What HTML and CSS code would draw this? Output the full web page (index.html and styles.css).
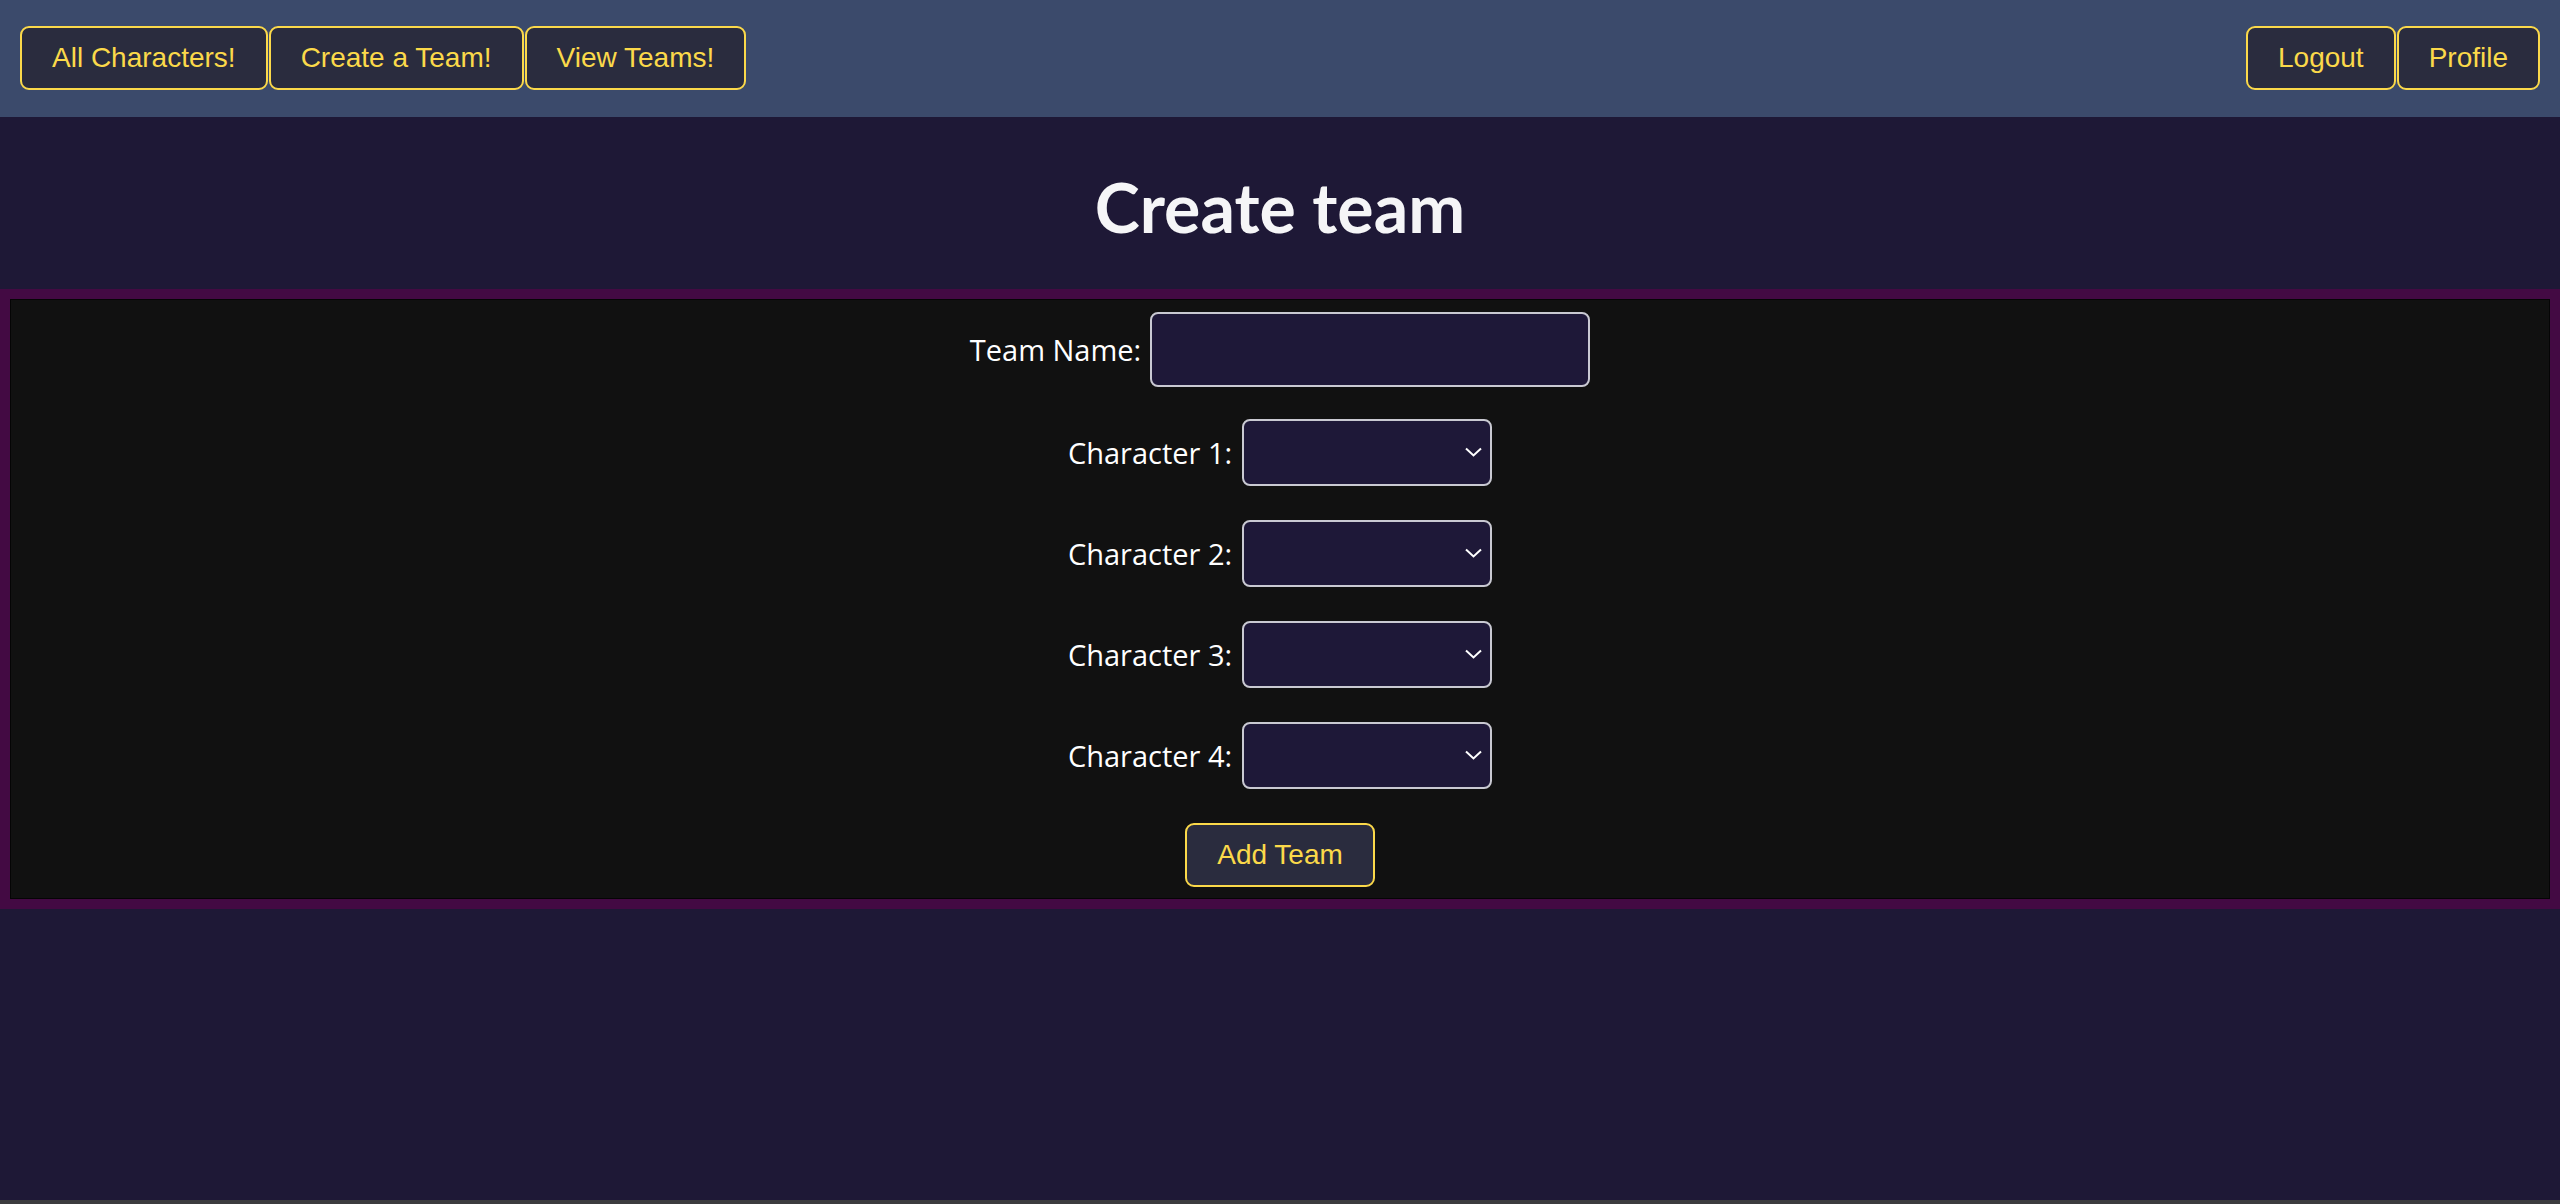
FILE: index.html
```html
<!DOCTYPE html>
<html lang="en">
<head>
<meta charset="utf-8">
<title>Create team</title>
<link rel="stylesheet" href="styles.css">
</head>
<body>
<nav class="topnav">
  <div class="nav-group">
    <button class="btn" type="button">All Characters!</button>
    <button class="btn" type="button">Create a Team!</button>
    <button class="btn" type="button">View Teams!</button>
  </div>
  <div class="nav-group">
    <button class="btn" type="button">Logout</button>
    <button class="btn" type="button">Profile</button>
  </div>
</nav>
<header class="page-title">
  <h1>Create team</h1>
</header>
<form class="team-form">
  <div class="row row-name">
    <label class="label" for="teamName">Team Name:</label>
    <input class="text-input" id="teamName" type="text">
  </div>
  <div class="row">
    <label class="label" for="c1">Character 1:</label>
    <div class="select-wrap">
      <select class="select" id="c1"><option></option></select>
      <svg class="chev" width="17" height="10" viewBox="0 0 17 10"><path d="M1 1.5 L8.5 8.5 L16 1.5" fill="none" stroke="#fff" stroke-width="2"/></svg>
    </div>
  </div>
  <div class="row">
    <label class="label" for="c2">Character 2:</label>
    <div class="select-wrap">
      <select class="select" id="c2"><option></option></select>
      <svg class="chev" width="17" height="10" viewBox="0 0 17 10"><path d="M1 1.5 L8.5 8.5 L16 1.5" fill="none" stroke="#fff" stroke-width="2"/></svg>
    </div>
  </div>
  <div class="row">
    <label class="label" for="c3">Character 3:</label>
    <div class="select-wrap">
      <select class="select" id="c3"><option></option></select>
      <svg class="chev" width="17" height="10" viewBox="0 0 17 10"><path d="M1 1.5 L8.5 8.5 L16 1.5" fill="none" stroke="#fff" stroke-width="2"/></svg>
    </div>
  </div>
  <div class="row">
    <label class="label" for="c4">Character 4:</label>
    <div class="select-wrap">
      <select class="select" id="c4"><option></option></select>
      <svg class="chev" width="17" height="10" viewBox="0 0 17 10"><path d="M1 1.5 L8.5 8.5 L16 1.5" fill="none" stroke="#fff" stroke-width="2"/></svg>
    </div>
  </div>
  <div class="row">
    <button class="btn" type="button">Add Team</button>
  </div>
</form>
<div class="bottom-edge"></div>
</body>
</html>
```
FILE: styles.css
```css
* { box-sizing: border-box; }
html, body { height: 100%; }
body {
  margin: 0;
  background: #1e1836;
  display: flex;
  flex-direction: column;
  min-height: 100vh;
  font-family: "Open Sans", "Liberation Sans", sans-serif;
}
.topnav {
  background: #3b4a6b;
  display: flex;
  justify-content: space-between;
  padding: 26px 20px 27px;
}
.nav-group { display: flex; gap: 1px; }
.btn {
  font-family: "Liberation Sans", Arial, sans-serif;
  font-size: 28px;
  line-height: 32px;
  color: #fbd94a;
  background: #2a2c3e;
  border: 2px solid #fbd94a;
  border-radius: 9px;
  padding: 14px 30px;
  margin: 0;
  cursor: pointer;
}
.page-title {
  height: 172px;
  display: flex;
  align-items: center;
  justify-content: center;
}
.page-title h1 {
  margin: 0;
  font-family: Lato, "Open Sans", sans-serif;
  font-weight: 700;
  font-size: 68px;
  line-height: 80px;
  color: #f5f5f7;
  padding-top: 7px;
}
.team-form {
  margin: 0;
  background: #111111;
  border: 10px solid #430a43;
  box-shadow: inset 0 0 0 1px #050505;
  padding: 13px 0 12px;
  display: flex;
  flex-direction: column;
  gap: 34px;
}
.row {
  display: flex;
  align-items: center;
  justify-content: center;
  gap: 10px;
}
.row-name { margin-bottom: -2px; gap: 9px; }
.label {
  color: #ffffff;
  font-family: "Open Sans", sans-serif;
  font-size: 29px;
}
.text-input {
  width: 440px;
  height: 75px;
  background: #1e1838;
  border: 2px solid #c9c9d2;
  border-radius: 8px;
  color: #fff;
  font-size: 28px;
  padding: 0 12px;
}
.select-wrap {
  position: relative;
  width: 250px;
  height: 67px;
}
.select {
  appearance: none;
  -webkit-appearance: none;
  width: 100%;
  height: 100%;
  background: #1e1838;
  border: 2px solid #c9c9d2;
  border-radius: 8px;
  color: #fff;
  font-size: 26px;
  padding: 0 12px;
}
.chev {
  position: absolute;
  right: 10px;
  top: 28px;
  pointer-events: none;
}
.bottom-edge {
  margin-top: auto;
  height: 4px;
  background: #3c3c3e;
}
```
